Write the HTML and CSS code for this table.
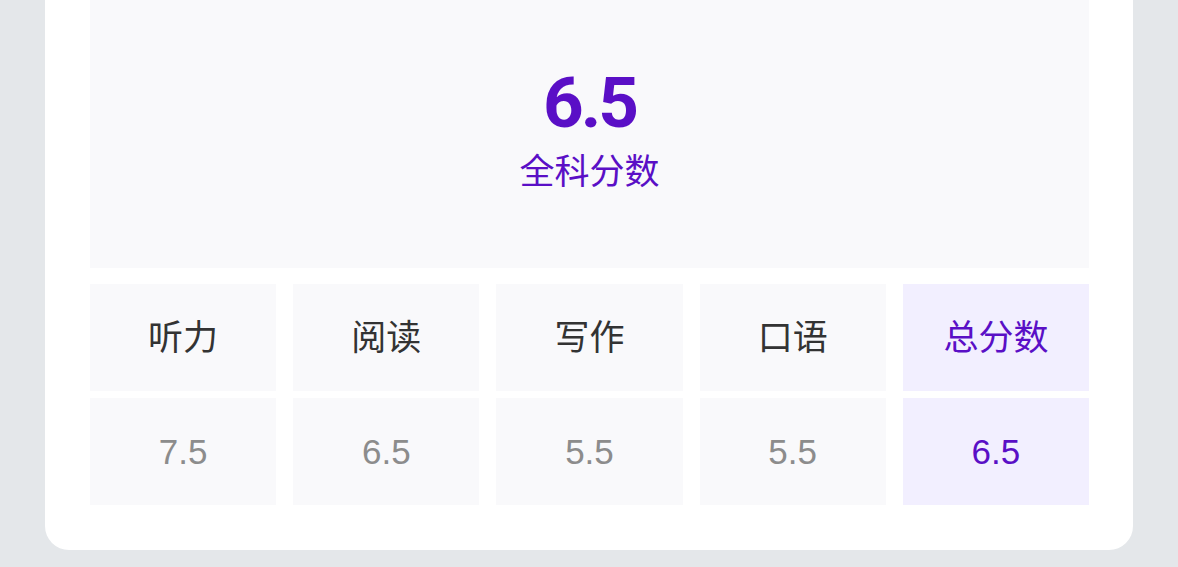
FILE: index.html
```html
<!DOCTYPE html>
<html lang="zh">

<head>
    <meta charset="UTF-8">
    <meta name="viewport" content="width=device-width, initial-scale=1.0">
    <title>成绩</title>
    <link rel="stylesheet" href="styles.css">
</head>

<body>
    <section class="page">
        <div class="card">
            <!-- 总分 -->
            <div class="overall">
                <div class="overall-score">6.5</div>
                <div class="overall-label">全科分数</div>
            </div>
            <!-- 各科分数 -->
            <div class="scores">
                <div class="cell head">听力</div>
                <div class="cell head">阅读</div>
                <div class="cell head">写作</div>
                <div class="cell head">口语</div>
                <div class="cell head total">总分数</div>
                <div class="cell value">7.5</div>
                <div class="cell value">6.5</div>
                <div class="cell value">5.5</div>
                <div class="cell value">5.5</div>
                <div class="cell value total">6.5</div>
            </div>
        </div>
    </section>
</body>

</html>
```

FILE: styles.css
```css
body {
    margin: 0;
    background-color: #e4e7ea;
    font-family: "Liberation Sans", "Noto Sans CJK SC", sans-serif;
}

.page {
    height: 567px;
    padding: 0 45px 0 45px;
    box-sizing: border-box;
}

.card {
    background-color: #fff;
    border-radius: 0 0 24px 24px;
    padding: 0 44px 45px 45px;
}

.overall {
    height: 268px;
    background-color: #f9f9fb;
    display: flex;
    flex-direction: column;
    align-items: center;
    justify-content: center;
    color: #5a0fc6;
}

.overall-score {
    font-family: "Roboto", sans-serif;
    font-weight: 700;
    font-size: 71px;
    line-height: 72px;
    letter-spacing: -3px;
    margin-top: -10px;
}

.overall-label {
    font-family: "Noto Sans CJK SC", sans-serif;
    font-size: 35px;
    line-height: 44px;
    margin-top: 8px;
}

.scores {
    margin-top: 16px;
    display: grid;
    grid-template-columns: repeat(5, 1fr);
    grid-template-rows: 107px 107px;
    column-gap: 17px;
    row-gap: 7px;
}

.cell {
    background-color: #f9f9fb;
    display: flex;
    align-items: center;
    justify-content: center;
}

.cell.head {
    font-family: "Noto Sans CJK SC", sans-serif;
    font-size: 35px;
    color: #333;
    padding-bottom: 6px;
}

.cell.value {
    font-size: 35px;
    color: #8c8c8c;
}

.cell.total {
    background-color: #f2efff;
    color: #5a0fc6;
}
```
